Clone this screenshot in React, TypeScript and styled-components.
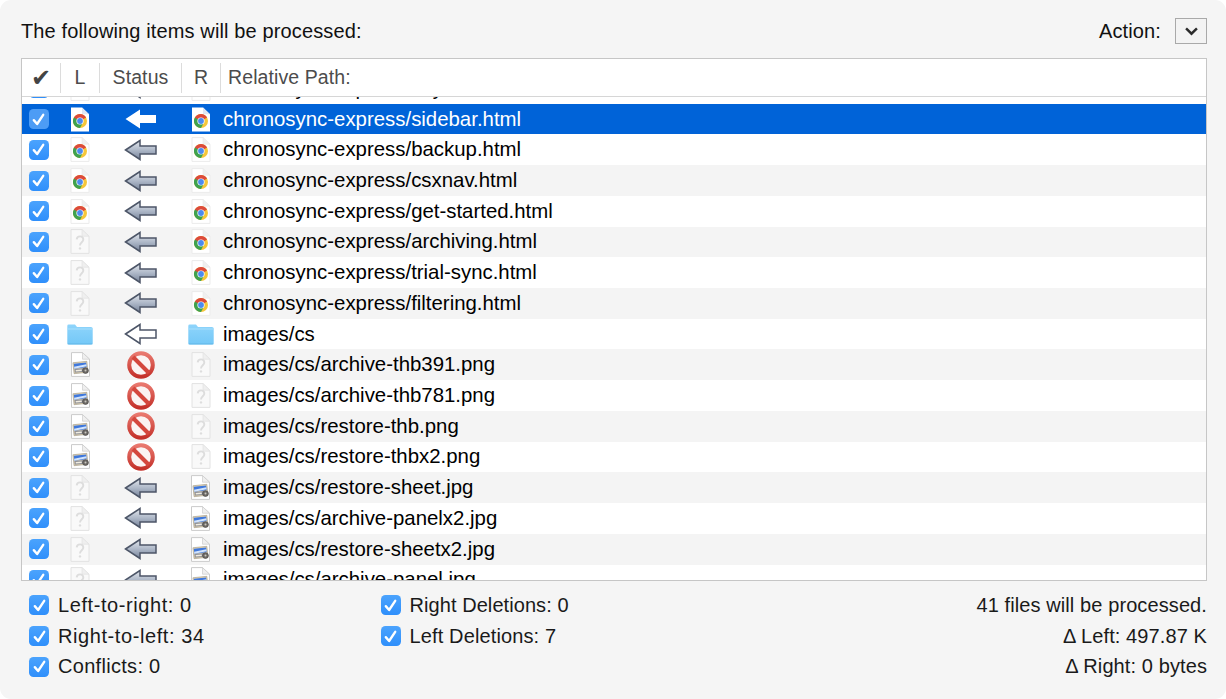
import React from "react";
import styled, { createGlobalStyle } from "styled-components";

const Global = createGlobalStyle`
  html, body { margin: 0; padding: 0; background: #fff; }
  body { font-family: "Liberation Sans", Arial, sans-serif; -webkit-font-smoothing: antialiased; }
`;

const Panel = styled.div`
  width: 1226px; height: 699px; box-sizing: border-box; background: #f5f5f5; border-radius: 11px;
  padding: 0 19px 0 21px; display: flex; flex-direction: column; overflow: hidden;
`;
const TopBar = styled.div`
  height: 58px; flex: none; display: flex; align-items: center; justify-content: space-between; padding-top: 4px; box-sizing: border-box;
`;
const Title = styled.div`font-size: 20px; letter-spacing: 0.13px; color: #111;`;
const ActionWrap = styled.div`display: flex; align-items: center; gap: 14px; font-size: 20px; letter-spacing: 0.13px; color: #111;`;
const ActionButton = styled.div`
  width: 32px; height: 26px; box-sizing: border-box; border: 1.5px solid #a9a9a9; background: #f3f3f3;
  display: flex; align-items: center; justify-content: center;
`;
const Table = styled.div`
  width: 1186px; height: 523px; flex: none; box-sizing: border-box; background: #fff;
  border: 1px solid #c6c6c6; border-left-width: 1.5px; display: flex; flex-direction: column; overflow: hidden;
`;
const HeaderRow = styled.div`
  height: 38px; flex: none; display: grid; grid-template-columns: 39px 39px 82px 39px 1fr; box-sizing: border-box;
  border-bottom: 1px solid #d6d6d6; align-items: center; background: #fff; position: relative; z-index: 1;
`;
const HeaderCell = styled.div<{ $left?: boolean }>`
  height: 30px; display: flex; align-items: center; justify-content: ${p => (p.$left ? "flex-start" : "center")};
  padding-left: ${p => (p.$left ? "7px" : "0")}; font-size: 19.5px; letter-spacing: 0.1px; color: #4c4c4c;
  border-right: ${p => (p.$left ? "none" : "1.5px solid #dcdcdc")}; box-sizing: border-box;
`;
const CheckMark = styled.span`font-family: "DejaVu Sans", sans-serif; font-size: 24px; color: #444; letter-spacing: 0;`;
const Rows = styled.div`flex: 1; overflow: hidden; min-height: 0;`;
const RowsInner = styled.div`margin-top: -24px;`;
const Row = styled.div<{ $alt: boolean; $sel?: boolean }>`
  height: 30.73px; box-sizing: border-box; display: grid; grid-template-columns: 39px 39px 82px 39px 1fr; align-items: center;
  background: ${p => (p.$sel ? "#0063d8" : p.$alt ? "#f4f4f4" : "#fff")};
  background-clip: content-box;
  padding: ${p => (p.$sel ? "0.7px 0" : "0")};
  color: ${p => (p.$sel ? "#fff" : "#000")};
`;
const IconCell = styled.div<{ $shift?: number }>`
  display: flex; align-items: center; justify-content: center;
  padding-right: ${p => p.$shift ?? 0}px;
`;
const PathCell = styled.div`font-size: 20.4px; padding-left: 2px; white-space: nowrap;`;
const Box = styled.div<{ $sel?: boolean }>`
  width: 20px; height: 20px; flex: none; box-sizing: border-box; border-radius: 4.5px;
  background: ${p => (p.$sel ? "#4d9cf5" : "linear-gradient(#4ba3fd, #2f8ffb)")};
  display: flex; align-items: center; justify-content: center;
`;
const Footer = styled.div`
  display: grid; grid-template-columns: 351.5px 1fr auto; padding: 9px 0 0 8px; flex: 1;
`;
const FooterCol = styled.div`display: flex; flex-direction: column;`;
const StatRow = styled.div<{ $ls: number }>`
  height: 30.75px; display: flex; align-items: center; gap: 9px; font-size: 20px;
  letter-spacing: ${p => p.$ls}px; color: #1a1a1a;
`;
const Note = styled.div`
  height: 30.75px; display: flex; align-items: center; justify-content: flex-end; font-size: 20px; letter-spacing: 0.1px; color: #1a1a1a;
`;

const Check = () => (
  <svg width="15" height="15" viewBox="0 0 14 14">
    <path d="M2.6 7.6 L5.7 11.2 L11.4 2.6" fill="none" stroke="#fff" strokeWidth="2.2" strokeLinecap="round" strokeLinejoin="round" />
  </svg>
);
const CheckBox = ({ sel }: { sel?: boolean }) => <Box $sel={sel}><Check /></Box>;

type PageTone = "bright" | "soft" | "faint" | "doc";
const edge: Record<PageTone, string> = { bright: "none", soft: "#ebebeb", faint: "#e2e2e2", doc: "#cbcbcb" };
const Page = ({ children, tone }: { children?: React.ReactNode; tone: PageTone }) => (
  <>
    <path d="M1 .6 H12 L19 7.2 V24.4 H1 Z" fill={tone === "faint" ? "#f9f9f9" : "#fff"} stroke={edge[tone]} strokeWidth="1" />
    <path d="M12 .6 V7.2 H19 Z" fill={tone === "bright" ? "#dfe6f2" : "#efefef"} stroke={edge[tone]} strokeWidth=".7" />
    {children}
  </>
);
const Chrome = ({ bright }: { bright?: boolean }) => (
  <svg width="20" height="25" viewBox="0 0 20 25">
    <Page tone={bright ? "bright" : "soft"}>
      <circle cx="10" cy="14" r="7" fill="#f5c63a" />
      <path d="M10 14 L16.1 10.5 A7 7 0 0 0 3.9 10.5 L6.5 15.5 Z" fill="#dc4a3b" />
      <path d="M10 14 L3.9 10.5 A7 7 0 0 0 10 21 L13 15.5 Z" fill="#3fa14f" />
      <circle cx="10" cy="14" r="3.6" fill="#fff" />
      <circle cx="10" cy="14" r="2.9" fill="#4c8bf0" />
    </Page>
  </svg>
);
const Unknown = () => (
  <svg width="20" height="25" viewBox="0 0 20 25">
    <Page tone="faint">
      <path d="M6.7 10.4 C7 6.4 13.5 6.4 13.3 10.6 C13.2 13.2 10 13.4 10 16.6" fill="none" stroke="#dddddd" strokeWidth="1.9" />
      <circle cx="10" cy="19.4" r="1.2" fill="#dddddd" />
    </Page>
  </svg>
);
const ImageDoc = () => (
  <svg width="21" height="25" viewBox="0 0 20 25">
    <Page tone="doc">
      <g transform="rotate(-6 10 16)">
        <rect x="3" y="10" width="14" height="11" fill="#ead9b4" stroke="#8f8873" strokeWidth=".5" />
        <rect x="3.8" y="11" width="12.4" height="5" fill="#3f78dc" />
        <path d="M3.8 14 L16.2 12.8 V14.8 L3.8 16Z" fill="#d3e4fb" />
        <path d="M3.8 16.4 H16.2 V20.2 H3.8Z" fill="#8f9197" />
        <path d="M5 17.6 H11 V19 H5Z" fill="#f1ecdf" />
      </g>
      <circle cx="15" cy="18.6" r="2.9" fill="#6d6a66" stroke="#45423f" strokeWidth=".6" />
      <circle cx="15" cy="18.6" r="1" fill="#c9c6bf" />
    </Page>
  </svg>
);
const Folder = () => (
  <svg width="26" height="21" viewBox="0 0 26 21">
    <defs>
      <linearGradient id="fld" x1="0" y1="0" x2="0" y2="1">
        <stop offset="0" stopColor="#8ed4fb" />
        <stop offset="1" stopColor="#74c8f7" />
      </linearGradient>
    </defs>
    <path d="M.3 2 Q.3 .6 1.7 .6 H8 L10 3 H24 Q25.7 3 25.7 4.6 V19 Q25.7 20.4 24.2 20.4 H1.8 Q.3 20.4 .3 19 Z" fill="url(#fld)" />
    <path d="M.3 5 H25.7" stroke="#a9e0fc" strokeWidth="1" />
    <path d="M.6 19.9 H25.4" stroke="#64b8e8" strokeWidth="1" />
  </svg>
);
type ArrowKind = "solid" | "white" | "outline";
const Arrow = ({ kind }: { kind: ArrowKind }) => (
  <svg width="34" height="24" viewBox="0 0 34 24">
    <defs>
      <linearGradient id="arr" x1="0" y1="0" x2="0" y2="1">
        <stop offset="0" stopColor="#e4e8ee" />
        <stop offset=".5" stopColor="#aeb8c8" />
        <stop offset="1" stopColor="#76839a" />
      </linearGradient>
    </defs>
    <path
      d="M1.5 12 L16 2.5 V8 H32 V16 H16 V21.5 Z"
      fill={kind === "solid" ? "url(#arr)" : "#fff"}
      stroke={kind === "white" ? "none" : "#4d5668"}
      strokeWidth="1.5"
      strokeLinejoin="miter"
    />
  </svg>
);
const Prohibit = () => (
  <svg width="28" height="28" viewBox="0 0 28 28">
    <defs>
      <linearGradient id="pr" x1="0" y1="0" x2="0" y2="1">
        <stop offset="0" stopColor="#e9786e" />
        <stop offset="1" stopColor="#c4312a" />
      </linearGradient>
    </defs>
    <circle cx="14" cy="14" r="11.8" fill="#fbf3f2" stroke="url(#pr)" strokeWidth="4" />
    <path d="M6 6 L22 22" stroke="#d4473d" strokeWidth="4" />
  </svg>
);

type Cell = "chrome" | "unknown" | "image" | "folder";
const CellIcon = ({ c, bright }: { c: Cell; bright?: boolean }) =>
  c === "chrome" ? <Chrome bright={bright} /> : c === "unknown" ? <Unknown /> : c === "image" ? <ImageDoc /> : <Folder />;

type Item = { l: Cell; s: ArrowKind | "no"; r: Cell; p: string; sel?: boolean };
const items: Item[] = [
  { l: "chrome", s: "solid", r: "chrome", p: "chronosync-express/keys.html" },
  { l: "chrome", s: "white", r: "chrome", p: "chronosync-express/sidebar.html", sel: true },
  { l: "chrome", s: "solid", r: "chrome", p: "chronosync-express/backup.html" },
  { l: "chrome", s: "solid", r: "chrome", p: "chronosync-express/csxnav.html" },
  { l: "chrome", s: "solid", r: "chrome", p: "chronosync-express/get-started.html" },
  { l: "unknown", s: "solid", r: "chrome", p: "chronosync-express/archiving.html" },
  { l: "unknown", s: "solid", r: "chrome", p: "chronosync-express/trial-sync.html" },
  { l: "unknown", s: "solid", r: "chrome", p: "chronosync-express/filtering.html" },
  { l: "folder", s: "outline", r: "folder", p: "images/cs" },
  { l: "image", s: "no", r: "unknown", p: "images/cs/archive-thb391.png" },
  { l: "image", s: "no", r: "unknown", p: "images/cs/archive-thb781.png" },
  { l: "image", s: "no", r: "unknown", p: "images/cs/restore-thb.png" },
  { l: "image", s: "no", r: "unknown", p: "images/cs/restore-thbx2.png" },
  { l: "unknown", s: "solid", r: "image", p: "images/cs/restore-sheet.jpg" },
  { l: "unknown", s: "solid", r: "image", p: "images/cs/archive-panelx2.jpg" },
  { l: "unknown", s: "solid", r: "image", p: "images/cs/restore-sheetx2.jpg" },
  { l: "unknown", s: "solid", r: "image", p: "images/cs/archive-panel.jpg" },
];

export default function App() {
  return (
    <>
      <Global />
      <Panel>
        <TopBar>
          <Title>The following items will be processed:</Title>
          <ActionWrap>
            Action:
            <ActionButton>
              <svg width="13" height="9" viewBox="0 0 12 8">
                <path d="M1 1.2 L6 6 L11 1.2" fill="none" stroke="#2b2b2b" strokeWidth="2.3" />
              </svg>
            </ActionButton>
          </ActionWrap>
        </TopBar>
        <Table>
          <HeaderRow>
            <HeaderCell><CheckMark>✔</CheckMark></HeaderCell>
            <HeaderCell>L</HeaderCell>
            <HeaderCell>Status</HeaderCell>
            <HeaderCell>R</HeaderCell>
            <HeaderCell $left>Relative Path:</HeaderCell>
          </HeaderRow>
          <Rows>
            <RowsInner>
              {items.map((it, i) => (
                <Row key={it.p} $alt={i % 2 === 1} $sel={it.sel}>
                  <IconCell $shift={6}><CheckBox sel={it.sel} /></IconCell>
                  <IconCell $shift={1}><CellIcon c={it.l} bright={it.sel} /></IconCell>
                  <IconCell>{it.s === "no" ? <Prohibit /> : <Arrow kind={it.s} />}</IconCell>
                  <IconCell $shift={2}><CellIcon c={it.r} bright={it.sel} /></IconCell>
                  <PathCell>{it.p}</PathCell>
                </Row>
              ))}
            </RowsInner>
          </Rows>
        </Table>
        <Footer>
          <FooterCol>
            <StatRow $ls={0.58}><CheckBox />Left-to-right: 0</StatRow>
            <StatRow $ls={0.58}><CheckBox />Right-to-left: 34</StatRow>
            <StatRow $ls={0.3}><CheckBox />Conflicts: 0</StatRow>
          </FooterCol>
          <FooterCol>
            <StatRow $ls={0.07}><CheckBox />Right Deletions: 0</StatRow>
            <StatRow $ls={0.13}><CheckBox />Left Deletions: 7</StatRow>
          </FooterCol>
          <FooterCol>
            <Note>41 files will be processed.</Note>
            <Note>Δ Left: 497.87 K</Note>
            <Note>Δ Right: 0 bytes</Note>
          </FooterCol>
        </Footer>
      </Panel>
    </>
  );
}
